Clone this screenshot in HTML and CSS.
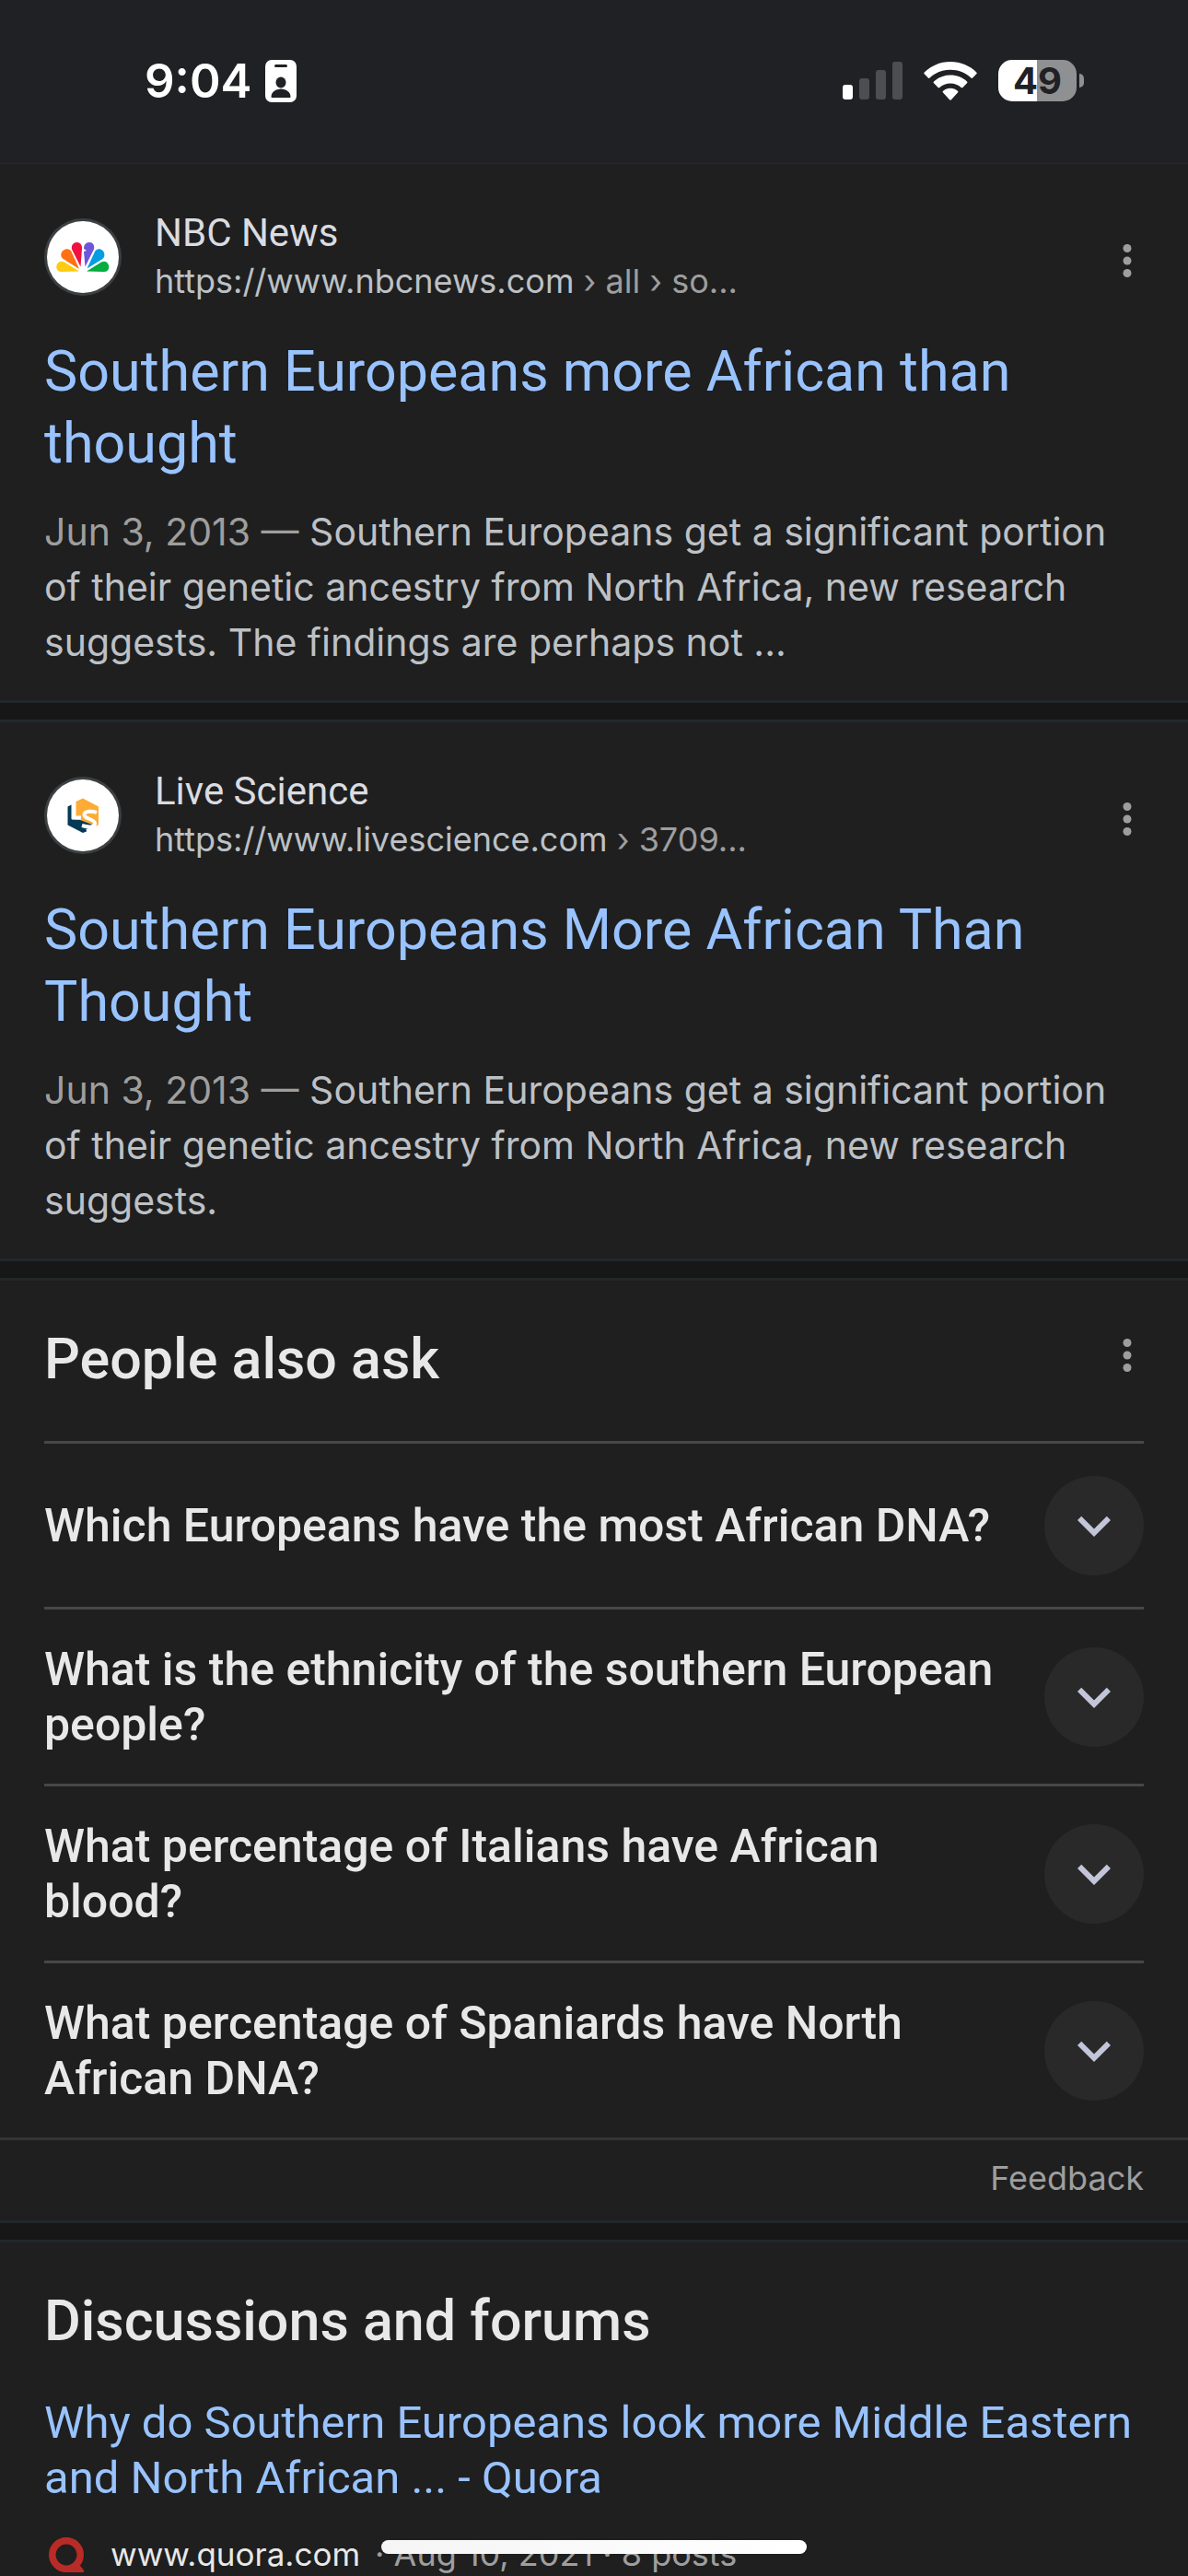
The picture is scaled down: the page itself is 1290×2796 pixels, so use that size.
FILE: index.html
```html
<!DOCTYPE html>
<html lang="en">
<head>
    <meta charset="UTF-8">
    <meta name="viewport" content="width=device-width, initial-scale=1">
    <title>Search results</title>
    <link rel="stylesheet" href="styles.css">
</head>
<body>
    <!-- shared icons -->
    <svg width="0" height="0" class="defs" aria-hidden="true">
        <symbol id="dots" viewBox="0 0 36 36">
            <circle cx="18" cy="4.5" r="4.5"/>
            <circle cx="18" cy="18" r="4.5"/>
            <circle cx="18" cy="31.5" r="4.5"/>
        </symbol>
        <symbol id="chevron" viewBox="0 0 24 24">
            <path d="M16.59 8.59L12 13.17 7.41 8.59 6 10l6 6 6-6z"/>
        </symbol>
    </svg>

    <header class="status">
        <div class="status-left">
            <span class="time">9:04</span>
            <svg class="badge" viewBox="0 0 34 46" aria-hidden="true">
                <rect width="34" height="46" rx="7" fill="#fff"/>
                <rect x="10" y="5" width="14" height="3" rx="1.5" fill="#202124"/>
                <ellipse cx="17" cy="24.500" rx="5.500" ry="6" fill="#202124"/>
                <path d="M6.500 40c0-5 5-8.500 10.500-8.500S27.500 35 27.500 40c0 .7-.5 1-1 1h-19c-.5 0-1-.3-1-1z" fill="#202124"/>
            </svg>
        </div>
        <div class="status-right">
            <svg class="signal" viewBox="0 0 65 41" aria-hidden="true">
                <rect x="0" y="25" width="11" height="16" rx="3" fill="#fff"/>
                <rect x="18" y="18" width="11" height="23" rx="3" fill="#4d4e51"/>
                <rect x="36" y="9" width="11" height="32" rx="3" fill="#4d4e51"/>
                <rect x="54" y="0" width="11" height="41" rx="3" fill="#4d4e51"/>
            </svg>
            <svg class="wifi" viewBox="0 0 58 42" fill="#fff" aria-hidden="true">
                <path d="M29 0C18 0 8 4.300.7 11.400c-.6.600-.6 1.300 0 1.900l4.100 4.200c.6.600 1.200.6 1.800 0C12.500 12 20.300 8.800 29 8.800s16.500 3.200 22.400 8.700c.6.600 1.200.6 1.800 0l4.100-4.200c.6-.6.6-1.300 0-1.900C50 4.300 40 0 29 0z"/>
                <path d="M29 14.500c-6.900 0-13.200 2.600-18 6.900-.6.600-.6 1.200 0 1.800l4.600 4.700c.6.600 1.100.5 1.700 0 3.200-2.800 7.200-4.500 11.700-4.500s8.500 1.700 11.700 4.500c.6.500 1.100.6 1.700 0l4.600-4.700c.6-.6.6-1.200 0-1.800-4.800-4.300-11.100-6.900-18-6.900z"/>
                <path d="M29 28.800c-3 0-5.700 1.100-7.900 2.900-.7.600-.7 1.200-.1 1.800l7.100 7.700c.6.600 1.200.6 1.800 0l7.100-7.700c.6-.6.6-1.200-.1-1.800-2.200-1.800-4.900-2.900-7.900-2.900z"/>
            </svg>
            <div class="battery"><span class="level">49</span><span class="nub"></span></div>
        </div>
    </header>

    <main>
        <article class="card result">
            <div class="source">
                <svg class="favicon" viewBox="0 0 84 84" aria-hidden="true">
                    <circle cx="42" cy="42" r="42" fill="#3c4043"/>
                    <circle cx="42" cy="42" r="39" fill="#fff"/>
                    <path d="M38 57.500L22 47.500c-4-2-7.500 0-8.500 3.500s1 7 5 7z" fill="#fccc12"/>
                    <path d="M38 55L29.500 36c-2-3.500-6-3.500-9-1s-3 6.500 0 9z" fill="#ff7112"/>
                    <path d="M39.500 52.500L41 33c.5-4-2-7-5.500-7s-6.500 3.500-5.500 7.500z" fill="#f1103f"/>
                    <path d="M44.500 52.500L43 36l3-1-3-2c0-4 2-7 6-7s6 3.500 5 7.500z" fill="#6e55dc"/>
                    <path d="M46.500 54.500L55 36c2-3.500 6-3.500 8.500-1s2.500 6.500 0 9z" fill="#069de0"/>
                    <path d="M46 57.500L62 47.500c4-2 7 0 8 3.500s-1 7-5 7z" fill="#05ac3f"/>
                </svg>
                <div class="site">
                    <div class="name">NBC News</div>
                    <div class="url">https://www.nbcnews.com <span>› all › so...</span></div>
                </div>
                <button class="more" aria-label="About this result"><svg><use href="#dots"/></svg></button>
            </div>
            <h3><a href="#">Southern Europeans more African than thought</a></h3>
            <p><span>Jun 3, 2013 —</span> Southern Europeans get a significant portion of their genetic ancestry from North Africa, new research suggests. The findings are perhaps not ...</p>
        </article>

        <article class="card result">
            <div class="source">
                <svg class="favicon" viewBox="0 0 84 84" aria-hidden="true">
                    <circle cx="42" cy="42" r="42" fill="#3c4043"/>
                    <circle cx="42" cy="42" r="39" fill="#fff"/>
                    <path d="M34.500 27l7.500-3.500 17 9V52l-3 2-21.500-8z" fill="#fcac35"/>
                    <path d="M25.500 32.500l4-2V46L39 47l13 5v5l-10 4-16.500-8.500z" fill="#043a56"/>
                    <path d="M32 29v15.500h8" fill="none" stroke="#fff" stroke-width="4"/>
                    <path d="M57 39c-5-2-13.500-2-13.500 2.500S55 46 55 50.500s-6 5-14 2.500M46 59l8-2" fill="none" stroke="#fff" stroke-width="4"/>
                </svg>
                <div class="site">
                    <div class="name">Live Science</div>
                    <div class="url">https://www.livescience.com <span>› 3709...</span></div>
                </div>
                <button class="more" aria-label="About this result"><svg><use href="#dots"/></svg></button>
            </div>
            <h3><a href="#">Southern Europeans More African Than Thought</a></h3>
            <p><span>Jun 3, 2013 —</span> Southern Europeans get a significant portion of their genetic ancestry from North Africa, new research suggests.</p>
        </article>

        <section class="card ask">
            <div class="heading">
                <h2>People also ask</h2>
                <button class="more" aria-label="About these results"><svg><use href="#dots"/></svg></button>
            </div>
            <ul>
                <li>
                    <span id="q1">Which Europeans have the most African DNA?</span>
                    <button class="expand" aria-labelledby="q1"><svg><use href="#chevron"/></svg></button>
                </li>
                <li>
                    <span id="q2">What is the ethnicity of the southern European people?</span>
                    <button class="expand" aria-labelledby="q2"><svg><use href="#chevron"/></svg></button>
                </li>
                <li>
                    <span id="q3">What percentage of Italians have African blood?</span>
                    <button class="expand" aria-labelledby="q3"><svg><use href="#chevron"/></svg></button>
                </li>
                <li>
                    <span id="q4">What percentage of Spaniards have North African DNA?</span>
                    <button class="expand" aria-labelledby="q4"><svg><use href="#chevron"/></svg></button>
                </li>
            </ul>
            <div class="feedback"><a href="#">Feedback</a></div>
        </section>

        <section class="card forums">
            <div class="heading">
                <h2>Discussions and forums</h2>
            </div>
            <h4><a href="#">Why do Southern Europeans look more Middle Eastern and North African ... - Quora</a></h4>
            <div class="post">
                <svg class="quora" viewBox="0 0 48 48" fill="#b92b27" aria-hidden="true">
                    <circle cx="24" cy="25" r="15.200" fill="none" stroke="#b92b27" stroke-width="7.500"/>
                    <path d="M24 44h18c1.500 0 1.500-1.500.8-2.500L38 35.500l-6 3z"/>
                </svg>
                <span>www.quora.com</span>
                <span class="meta">· Aug 10, 2021 · 8 posts</span>
            </div>
        </section>
    </main>

    <div class="home"></div>
</body>
</html>
```
FILE: styles.css
```css
* { box-sizing: border-box; }

body {
    margin: 0;
    background: #1f1f1f;
    color: #e8e8e8;
    font-family: Inter, "Liberation Sans", sans-serif;
}

a { color: inherit; text-decoration: none; }

button {
    border: 0;
    padding: 0;
    background: none;
    cursor: pointer;
}

h2, h3, h4, p, ul { margin: 0; padding: 0; }

.defs { position: absolute; }

/* status bar */
.status {
    display: flex;
    justify-content: space-between;
    align-items: center;
    height: 178px;
    padding: 0 113px 2px 157px;
    background: #202124;
    border-bottom: 1px solid #28292d;
    color: #fff;
}

.status-left, .status-right {
    display: flex;
    align-items: center;
}
.status-left { gap: 14px; }
.status-right { gap: 23px; }

.time {
    font-size: 51px;
    font-weight: 600;
    line-height: 60px;
}
.badge { width: 34px; height: 46px; }
.signal { width: 65px; height: 41px; }
.wifi { width: 58px; height: 42px; }

.battery {
    display: flex;
    align-items: center;
    gap: 3px;
}
.level {
    width: 85px;
    border-radius: 15px;
    background: linear-gradient(90deg, #fff 50%, #8f9092 50%);
    color: #202124;
    font-size: 40px;
    font-weight: 700;
    line-height: 45px;
    text-align: center;
}
.nub {
    width: 5px;
    height: 15px;
    border-radius: 0 8px 8px 0;
    background: #8f9092;
}

/* cards */
.card {
    padding: 0 48px;
    border-bottom: 3px solid #22272a;
}
.card + .card {
    margin-top: 18px;
    border-top: 3px solid #22272a;
    box-shadow: 0 -18px #171717;
}

.result { padding-top: 59px; padding-bottom: 33px; }

.source {
    display: flex;
    align-items: center;
    height: 84px;
}
.favicon { width: 84px; height: 84px; }
.site { flex: 1; margin-left: 36px; }
.name {
    color: #dadce0;
    font-family: Roboto, "Liberation Sans", sans-serif;
    font-size: 42px;
    line-height: 52px;
}
.url {
    color: #bdc1c6;
    font-size: 36px;
    line-height: 52px;
}
.url span, .result p span, .meta { color: #9e9e9e; }

.more { padding-top: 8px; }
.more svg {
    display: block;
    width: 36px;
    height: 36px;
    fill: #9e9e9e;
}

.result h3 {
    margin: 43px 0 27px;
    color: #99c3ff;
    font-family: Roboto, "Liberation Sans", sans-serif;
    font-size: 61px;
    font-weight: 400;
    line-height: 78px;
}
.result p {
    color: #bdc1c6;
    font-size: 41px;
    line-height: 60px;
}

.heading {
    display: flex;
    justify-content: space-between;
    align-items: center;
    padding-top: 46px;
}
.heading .more { padding: 0 0 8px; }
.heading h2 {
    font-family: Roboto, "Liberation Sans", sans-serif;
    font-size: 61px;
    font-weight: 500;
    line-height: 78px;
}

/* people also ask */
.ask ul { margin-top: 50px; list-style: none; }
.ask li {
    display: flex;
    justify-content: space-between;
    align-items: center;
    gap: 40px;
    padding: 35px 0 34px;
    border-top: 3px solid #474747;
    font-family: Roboto, "Liberation Sans", sans-serif;
    font-size: 50px;
    font-weight: 500;
    line-height: 60px;
}
.expand {
    flex: none;
    width: 108px;
    height: 108px;
    border-radius: 50%;
    background: #292929;
}
.expand svg {
    display: block;
    width: 72px;
    height: 72px;
    margin: auto;
    fill: #c3c6d9;
}
.feedback {
    margin: 0 -48px;
    padding: 17px 48px 22px;
    border-top: 3px solid #333435;
    color: #9e9e9e;
    font-size: 36px;
    line-height: 48px;
    text-align: right;
}

/* discussions */
.card.forums { border-bottom: 0; }
.forums h4 {
    margin: 42px -12px 28px 0;
    color: #99c3ff;
    font-family: Roboto, "Liberation Sans", sans-serif;
    font-size: 49px;
    font-weight: 400;
    line-height: 60px;
}
.post {
    display: flex;
    align-items: center;
    font-size: 35px;
    line-height: 48px;
}
.quora { width: 48px; height: 48px; margin-right: 24px; }
.meta { margin-left: 16px; font-size: 36px; }

.home {
    position: fixed;
    bottom: 24px;
    left: 50%;
    width: 462px;
    height: 15px;
    margin-left: -231px;
    border-radius: 8px;
    background: linear-gradient(90deg, #f5f5f5, #fff);
}
```
